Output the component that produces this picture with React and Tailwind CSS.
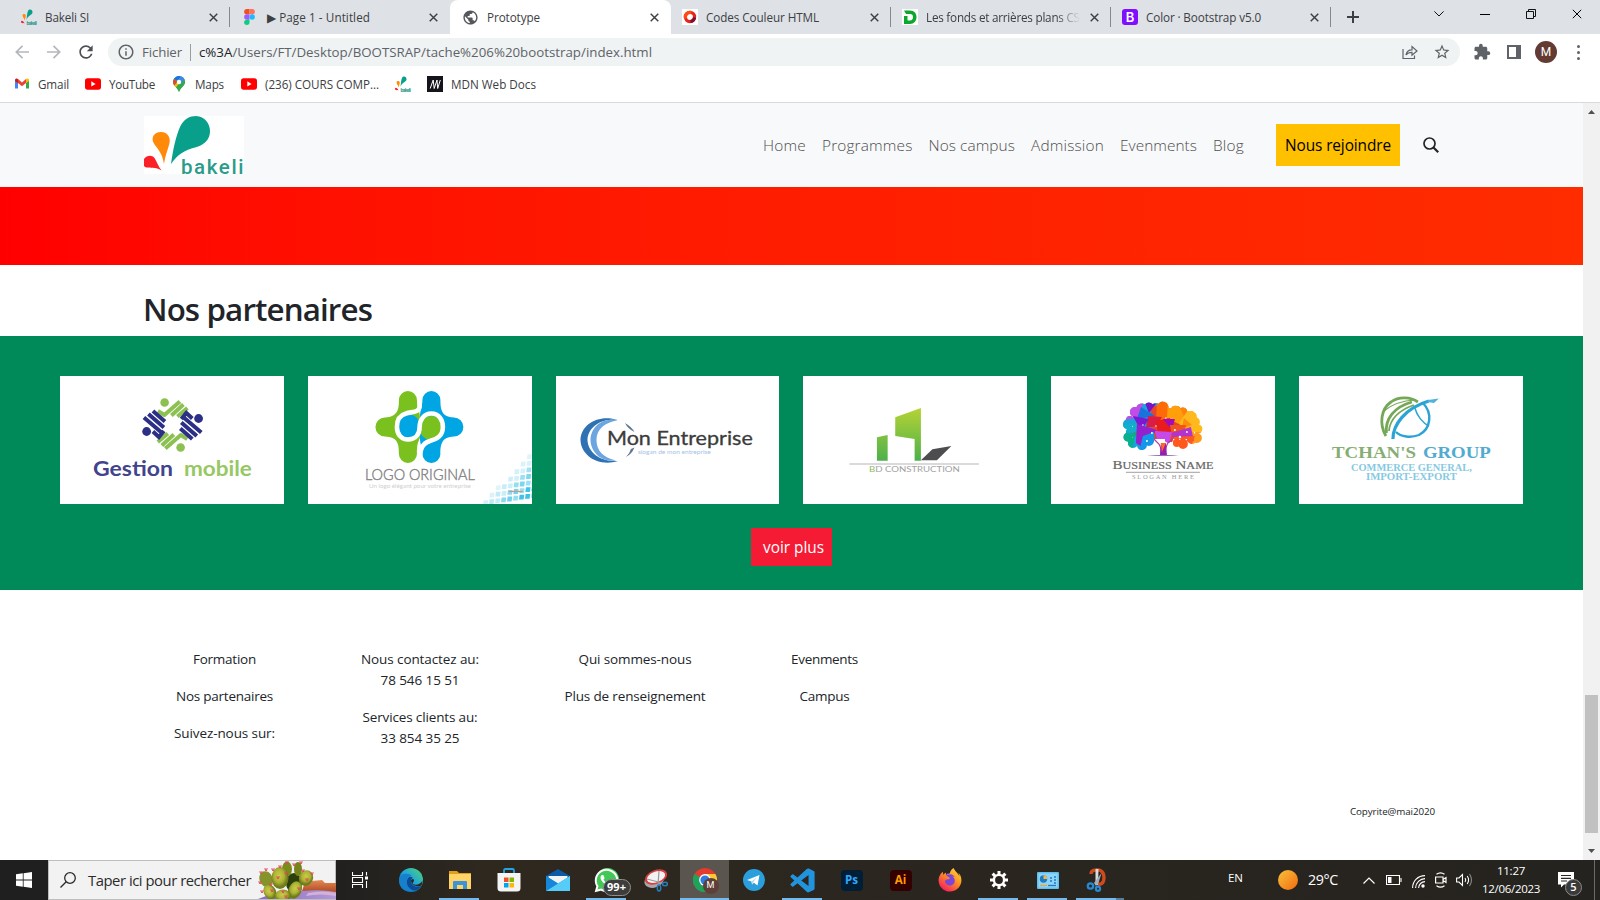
import { useLayoutEffect, useRef } from "react";
import { MdExtension, MdInfoOutline, MdPublic, MdRefresh, MdStarBorder } from "react-icons/md";
import { FaFirefoxBrowser, FaWhatsapp } from "react-icons/fa";
import { BiLogoVisualStudio } from "react-icons/bi";

/* One line of text whose tracking is adjusted so that it fills a given width. */
function Fit({ w, className = "", children }) {
  const ref = useRef(null);
  useLayoutEffect(() => {
    const el = ref.current;
    el.style.letterSpacing = "0px";
    const natural = el.getBoundingClientRect().width;
    el.style.letterSpacing = `${(w - natural) / el.textContent.length}px`;
  }, [w]);
  return (
    <span ref={ref} className={`inline-block shrink-0 whitespace-pre ${className}`}>
      {children}
    </span>
  );
}

function BakeliMark({ className }) {
  return (
    <svg viewBox="0 0 100 58" preserveAspectRatio="none" className={`overflow-visible ${className}`}>
      <rect width="100" height="58" fill="#fff" />
      <path d="M27 48C29 33 32 20 36 11C39.500 3 46 0 52 0C61 .5 66 8 66 15C66 24 60 29 51 31.500C41 34 34 38 27 48Z" fill="#08a08a" />
      <path d="M20 48C18.500 38 14 33 10.500 28.500C6 22 10 16 17 16C24 16 27 22 25.300 28C23 36 21.500 39 20 48Z" fill="#ff8a0a" />
      <path d="M17.500 54.500C13 51.500 8 52 4 51.500C2 51.500 1 51 0 50V43C3 39 8 39 10.500 42C13 46 14 50 17.500 54.500Z" fill="#fb2027" />
      <text x="37" y="57.800" fontFamily="Roboto" fontWeight="500" fontSize="20.500" fill="#2b9b8b" textLength="62.500">bakeli</text>
    </svg>
  );
}

function BakeliIcon() {
  return (
    <svg viewBox="0 0 16 16" className="size-4 shrink-0">
      <path d="M5.500 11C6 7 6 4 7 2C8 0 11 0 11.500 3C12 6 7 6 5.500 11Z" fill="#08a08a" />
      <path d="M3.800 11.500C3 9 1.300 8 1.600 6C2 4.500 4.500 4.500 4.800 6.500C4.800 8 4 9 3.800 11.500Z" fill="#ff8a0a" />
      <path d="M3.500 14.500C2 14 0 14.500 0 12.500C.5 11 2.500 12 3.500 14.500Z" fill="#fb2027" />
      <text x="5.500" y="15.600" fontFamily="Roboto" fontWeight="700" fontSize="5" fill="#2b9b8b" textLength="10.300">bakeli</text>
    </svg>
  );
}

function Cross({ className = "size-2 text-[#3c4043]", sw = 1.600 }) {
  return (
    <svg viewBox="0 0 10 10" className={`shrink-0 ${className}`}>
      <path d="M.8.8 9.200 9.200M9.200.8.8 9.200" stroke="currentColor" strokeWidth={sw} />
    </svg>
  );
}

function FigmaIcon() {
  return (
    <svg viewBox="0 0 12 18" className="mr-1 ml-[3px] h-4 w-[11px] shrink-0">
      <path d="M6 0H3a3 3 0 0 0 0 6h3Z" fill="#f24e1e" />
      <path d="M6 0h3a3 3 0 0 1 0 6H6Z" fill="#ff7262" />
      <path d="M6 6H3a3 3 0 0 0 0 6h3Z" fill="#a259ff" />
      <circle cx="9" cy="9" r="3" fill="#1abcfe" />
      <path d="M6 12H3a3 3 0 1 0 3 3Z" fill="#0acf83" />
    </svg>
  );
}

const tabIcons = {
  bakeli: <BakeliIcon />,
  figma: <FigmaIcon />,
  globe: <MdPublic className="size-[17px] shrink-0 text-[#54585c]" />,
  couleur: (
    <svg viewBox="0 0 16 16" className="size-4 shrink-0">
      <rect width="16" height="16" fill="#fff" />
      <circle cx="8" cy="8" r="4.600" fill="none" stroke="#e8231f" strokeWidth="3.200" />
      <path d="M3.600 9.500A4.600 4.600 0 0 1 9.500 3.600" fill="none" stroke="#ff4a12" strokeWidth="3.200" />
      <path d="M12.500 8.600A4.600 4.600 0 0 1 8.600 12.500" fill="none" stroke="#7b1032" strokeWidth="3.200" />
    </svg>
  ),
  dev: (
    <svg viewBox="0 0 16 16" className="size-4 shrink-0">
      <rect width="16" height="16" fill="#fff" />
      <path d="M2 1.500H8C12.500 1.500 14.500 4.500 14.500 8C14.500 12 12 15 8 15H2V7H5.500V11.500H8C10 11.500 11 10 11 8.200C11 6.200 10 5 8 5H4Z" fill="#0ba82b" />
    </svg>
  ),
  bootstrap: (
    <span className="flex size-4 shrink-0 items-center justify-center rounded-[3px] bg-[#7f0fff] font-['Inter',sans-serif] text-[13px] leading-none font-semibold text-white">B</span>
  ),
};

function Tab({ icon, title, w, active, divider, clip }) {
  return (
    <div className={active ? "relative flex h-[34px] w-[221px] shrink-0 items-center rounded-t-lg bg-white pr-3 pl-3" : "relative flex h-[34px] w-[220px] shrink-0 items-center pr-3 pl-[11px]"}>
      {tabIcons[icon]}
      <div className={clip ? "mb-[3px] ml-2 w-[154px] overflow-hidden [mask-image:linear-gradient(to_right,black_130px,transparent_154px)]" : "mb-[3px] ml-2"}>
        <Fit w={w} className="text-[11.7px] leading-5 text-[#3c4043]">{title}</Fit>
      </div>
      <Cross className="ml-auto size-[9px] text-[#3c4043]" />
      {divider && <span className="absolute top-[7px] right-0 h-5 w-px bg-[#85888c]" />}
    </div>
  );
}

function TabStrip() {
  return (
    <div className="flex h-[34px] items-center bg-[#dee1e6] pl-[10px]">
      <Tab icon="bakeli" title="Bakeli SI" w={44} divider />
      <Tab icon="figma" title="▶ Page 1 - Untitled" w={103} />
      <Tab icon="globe" title="Prototype" w={53} active />
      <Tab icon="couleur" title="Codes Couleur HTML" w={113} divider />
      <Tab icon="dev" title="Les fonds et arrières plans CSS" w={160} clip divider />
      <Tab icon="bootstrap" title="Color · Bootstrap v5.0" w={115} divider />
      <svg viewBox="0 0 12 12" className="ml-4 size-3 text-[#3c4043]">
        <path d="M6 0V12M0 6H12" stroke="currentColor" strokeWidth="2" />
      </svg>
      <div className="mr-[18px] mb-1.5 ml-auto flex items-center gap-9 text-[#111]">
        <svg viewBox="0 0 10 6" className="h-1.5 w-2.5"><path d="M.4.4 5 5 9.600.4" fill="none" stroke="currentColor" strokeWidth="1" /></svg>
        <span className="h-px w-2.5 bg-black" />
        <svg viewBox="0 0 10 10" className="size-2.5"><path d="M.5 2.500H7.500V9.500H.5ZM2.500 2.500V.5H9.500V7.500H7.500" fill="none" stroke="currentColor" /></svg>
        <Cross className="size-2.5 text-black" sw={1} />
      </div>
    </div>
  );
}

function Toolbar() {
  return (
    <div className="flex h-9 items-center bg-white pl-[15px]">
      <svg viewBox="0 0 14 14" className="size-3.5 text-[#b4b7ba]"><path d="M7.500.8 1.300 7 7.500 13.200M1.300 7H14" fill="none" stroke="currentColor" strokeWidth="1.700" /></svg>
      <svg viewBox="0 0 14 14" className="ml-[18px] size-3.5 text-[#b4b7ba]"><path d="M6.500.8 12.700 7 6.500 13.200M12.700 7H0" fill="none" stroke="currentColor" strokeWidth="1.700" /></svg>
      <MdRefresh className="ml-[15px] size-5 text-[#4c5054]" />
      <div className="ml-3 flex h-7 w-[1352px] items-center rounded-full bg-[#eff3f4] pl-[9px]">
        <MdInfoOutline className="size-[18px] text-[#5f6368]" />
        <Fit w={40} className="ml-[7px] text-[13.3px] leading-5 text-[#5f6368]">Fichier</Fit>
        <span className="mx-[8px] h-[17px] w-px bg-[#9a9da1]" />
        <Fit w={453} className="text-[13.3px] leading-5 text-[#5f6368]">
          <span className="text-[#202124]">c%3A</span>/Users/FT/Desktop/BOOTSRAP/tache%206%20bootstrap/index.html
        </Fit>
        <svg viewBox="0 0 16 16" className="mr-[15px] ml-auto size-4 text-[#5f6368]">
          <path d="M1 5V14.500H12.500V11.500M4 11C4.500 7.500 7 5.800 10 5.800V2.500L15 7L10 11.300V8.300C7.500 8.300 5.500 9 4 11Z" fill="none" stroke="currentColor" strokeWidth="1.200" />
        </svg>
        <MdStarBorder className="mr-[9px] size-[18px] text-[#5f6368]" />
      </div>
      <MdExtension className="ml-[13px] size-[18px] text-[#5f6368]" />
      <span className="ml-4 h-3.5 w-3.5 border-2 border-r-[5px] border-[#5f6368]" />
      <span className="ml-[14px] flex size-[22px] items-center justify-center rounded-full bg-[#643b33] font-['Roboto',sans-serif] text-[12px] text-white">M</span>
      <span className="ml-5 flex flex-col gap-[3px]">
        <i className="size-[3px] rounded-full bg-[#5f6368]" />
        <i className="size-[3px] rounded-full bg-[#5f6368]" />
        <i className="size-[3px] rounded-full bg-[#5f6368]" />
      </span>
    </div>
  );
}

function YouTubeIcon() {
  return (
    <svg viewBox="0 0 16 12" className="h-3 w-4">
      <rect width="16" height="11.500" y=".2" rx="2.600" fill="#f00" />
      <path d="M6.300 3.300 10.600 5.900 6.300 8.500Z" fill="#fff" />
    </svg>
  );
}

function Bookmarks() {
  return (
    <div className="flex h-8 items-center bg-white pb-[5px] pl-[15px] text-[11.7px] leading-5 text-[#3c4043]">
      <svg viewBox="0 0 14 11" className="h-[11px] w-3.5">
        <path d="M0 1.500V10.500H3V4Z" fill="#4285f4" />
        <path d="M14 1.500V10.500H11V4Z" fill="#34a853" />
        <path d="M3 1 7 4.500 11 1V5L7 8.300 3 5Z" fill="#ea4335" />
        <path d="M0 2C0 .3 2 0 3 1V5.200L0 2.900Z" fill="#c5221f" />
        <path d="M14 2C14 .3 12 0 11 1V5.200L14 2.900Z" fill="#fbbc04" />
      </svg>
      <Fit w={31} className="ml-[9px]">Gmail</Fit>
      <span className="ml-4"><YouTubeIcon /></span>
      <Fit w={46} className="ml-2">YouTube</Fit>
      <svg viewBox="0 0 12 16" className="ml-[18px] h-4 w-3">
        <path d="M6 0A6 6 0 0 1 12 6C12 10 7.500 11 6 16C4.500 11 0 10 0 6A6 6 0 0 1 6 0Z" fill="#34a853" />
        <path d="M.9 3A6 6 0 0 1 8 .4L4.500 4.500Z" fill="#1a73e8" />
        <path d="M.9 3 4.200 5.800 1.400 9.500C-.5 7 0 4.500.9 3Z" fill="#ea4335" />
        <path d="M1.400 9.500 7.800 2 10 10C6 12 4 13 1.400 9.500Z" fill="#fbbc04" />
        <path d="M8 .4C12 1.500 13 6 11 9C9 11.500 7 12.500 6 16C5 13 3.500 12 3 11.200L9 4Z" fill="#34a853" />
        <path d="M8 .4C9.500.8 10.800 2 11.400 3.300L7.600 7.800 4.500 4.500Z" fill="#4285f4" />
        <circle cx="6" cy="6" r="2.200" fill="#fff" />
      </svg>
      <Fit w={29} className="ml-[10px]">Maps</Fit>
      <span className="ml-[17px]"><YouTubeIcon /></span>
      <Fit w={114} className="ml-2">(236) COURS COMP...</Fit>
      <span className="ml-4"><BakeliIcon /></span>
      <svg viewBox="0 0 16 16" className="ml-4 size-4">
        <rect width="16" height="16" fill="#15141a" />
        <path d="M3.200 12.500 6.200 4 7.200 12.500 10 4 10.700 12.500 13.300 4" fill="none" stroke="#fff" strokeWidth="1" />
      </svg>
      <Fit w={85} className="ml-2">MDN Web Docs</Fit>
    </div>
  );
}

function Navbar() {
  const links = [["Home", 43], ["Programmes", 90.5], ["Nos campus", 86.5], ["Admission", 73], ["Evenments", 77], ["Blog", 31]];
  return (
    <nav className="flex h-[84px] items-center bg-[#f8f9fb] pl-36">
      <BakeliMark className="h-[58px] w-[100px]" />
      <div className="mt-0.5 ml-[519px] flex gap-4">
        {links.map(([t, w]) => <Fit key={t} w={w} className="text-[15.4px] leading-6 font-light text-[#4e4e4e]">{t}</Fit>)}
      </div>
      <button className="ml-8 flex h-[42px] w-[124px] items-center justify-center bg-[#ffc000] pt-0.5">
        <Fit w={106} className="text-[15.4px] leading-6 text-black">Nous rejoindre</Fit>
      </button>
      <svg viewBox="0 0 16 16" className="ml-[23px] size-4 text-[#212529]">
        <circle cx="6.500" cy="6.500" r="5.500" fill="none" stroke="currentColor" strokeWidth="1.700" />
        <path d="M10.500 10.500 15.200 15.200" stroke="currentColor" strokeWidth="2.200" />
      </svg>
    </nav>
  );
}

function GestionMobile() {
  const green = (
    <>
      <circle cx="104.700" cy="26.500" r="4.300" />
      <path d="M98 35 104.500 39 120 25.500M111.500 39.500 123.500 28.500M117.500 40.500 127.500 32" fill="none" stroke="#8cc152" strokeWidth="4" strokeLinejoin="round" />
    </>
  );
  const navy = (
    <>
      <circle cx="86.700" cy="55.500" r="4.400" />
      <path d="M84 41.500 101 56M88.500 38 104 51.500M93 35 105 45.500M93 55.500 99 61 104 55" fill="none" stroke="#2b2f86" strokeWidth="4" />
    </>
  );
  return (
    <>
      <g fill="#8cc152">{green}<g transform="rotate(180 112.700 49)">{green}</g></g>
      <g fill="#2b2f86">{navy}<g transform="rotate(180 112.700 49)">{navy}</g></g>
      <g fontFamily="Lato" fontWeight="700" fontSize="20.500">
        <text x="33" y="100.500" fill="#41448c" textLength="80" lengthAdjust="spacingAndGlyphs">Gestion</text>
        <text x="124" y="100.500" fill="#97c864" textLength="68" lengthAdjust="spacingAndGlyphs">mobile</text>
      </g>
    </>
  );
}

function LogoOriginal() {
  const cells = [];
  for (let r = 0; r < 8; r++) {
    for (let c = 0; c < 9; c++) {
      const x = 178 + c * 6 - r * 0.3;
      const y = 78 + r * 6.600 - c * 0.9;
      const k = (c + r * 1.25 - 8) / 8;
      if (k > 0 && y > 66) cells.push(<rect key={`${r}-${c}`} x={x} y={y} width="4.600" height="4.800" transform={`skewX(-8) translate(${y * 0.14} 0)`} fill={(c + r) % 3 ? "#35bfe6" : "#7fd8ef"} opacity={Math.min(0.95, k + 0.12)} />);
    }
  }
  return (
    <>
      <path d="M91 24A9 9 0 0 1 109 24C109 30 112 34 112 42V62C109 68 109 72 109 78A9 9 0 0 1 91 78C91 68 90 61 77 60.500A9.500 9.500 0 0 1 77 41.500C90 41 91 33 91 24Z" fill="#7ac01f" />
      <path d="M114.500 24A9 9 0 0 1 132.500 24C132.500 34 134 41 146 41.500A9.500 9.500 0 0 1 146 60.500C134 61 132.500 68 132.500 78A9 9 0 0 1 114.500 78C114.500 72 112 68 112 62V42C112 34 114.500 30 114.500 24Z" fill="#00a5e3" />
      <circle cx="100" cy="50" r="12" fill="#00a5e3" />
      <circle cx="123.500" cy="52" r="12" fill="#7ac01f" />
      <path d="M111.700 14V30C111.700 37 104 35.500 98 37.500C89 40 89 48 89 51C89 59 94 63.500 100 63.500C108 63.500 111.700 58 111.700 51C111.700 44 116 37.500 123.500 37.500C131 37.500 135 44 135 51C135 60 129 63 122 65C114 67.500 111.700 73 111.700 88" fill="none" stroke="#fff" strokeWidth="4.600" />
      <text x="57" y="104" fontFamily="Lato" fontWeight="300" fontSize="16" fill="#777" stroke="#888" strokeWidth=".4" textLength="110" lengthAdjust="spacingAndGlyphs">LOGO ORIGINAL</text>
      <text x="61" y="112.500" fontFamily="Lato" fontSize="6.500" fill="#cfcfcf" textLength="102" lengthAdjust="spacingAndGlyphs">Un logo élégant pour votre entreprise</text>
      {cells}
      <path d="M201 115.500H215" stroke="#c98" strokeWidth="1.200" />
    </>
  );
}

function MonEntreprise() {
  return (
    <>
      <path d="M62 44C43 38 25 48 24.500 64C25 80 43 91 62 85C45 86 32 77 31.500 64C32 51 45 42 62 44Z" fill="#2f72b4" />
      <path d="M62 44.500C46 41 35 51 34.500 64C35 77 46 86.500 60 84.500C48 82 40.500 75 40.500 64C40.500 53 49 46 62 44.500Z" fill="#6da5e0" />
      <path d="M69 47Q76 51 78.500 56Q72 53 69 47ZM78.500 71.500Q76 78 70 81Q74 77 75 73Z" fill="#5e7894" />
      <text x="51" y="69" fontFamily="Lato" fontWeight="400" fontSize="18.500" fill="#3c3c3c" stroke="#3c3c3c" strokeWidth=".3" textLength="146" lengthAdjust="spacingAndGlyphs">Mon Entreprise</text>
      <text x="82" y="78" fontFamily="Lato" fontSize="6" fill="#a3c3e4" textLength="73" lengthAdjust="spacingAndGlyphs">slogan de mon entreprise</text>
    </>
  );
}

function BdConstruction() {
  return (
    <>
      <defs>
        <linearGradient id="bd" x1="0" y1="32" x2="0" y2="85" gradientUnits="userSpaceOnUse">
          <stop stopColor="#b5d334" /><stop offset="1" stopColor="#4cb04c" />
        </linearGradient>
      </defs>
      <path d="M74 61.300 84.700 59V84.700H74ZM92.300 41.300 118 32V84.700H111.700V63L92.300 60Z" fill="url(#bd)" />
      <path d="M118 84.300 129.500 73.300 148.500 70 134 84.300Z" fill="#4d4d50" />
      <path d="M46.500 88H176" stroke="#b5b5b5" strokeWidth="1" />
      <text x="66" y="96.500" fontFamily="Lato" fontSize="8.300" fill="#a2a2a2" textLength="91" lengthAdjust="spacingAndGlyphs"><tspan fill="#8bbb6a">B</tspan>D CONSTRUCTION</text>
    </>
  );
}

function BusinessName() {
  return (
    <>
      <defs>
        <clipPath id="tree">
          <circle cx="84" cy="36" r="5" /><circle cx="91" cy="33.500" r="6" /><circle cx="98" cy="31.500" r="5" /><circle cx="105" cy="32" r="5" /><circle cx="112" cy="31" r="5.500" />
          <circle cx="118" cy="36" r="4" /><circle cx="125" cy="35" r="5.500" /><circle cx="132" cy="36" r="4.500" /><circle cx="140" cy="41" r="6" /><circle cx="144" cy="46" r="5" /><circle cx="147" cy="53" r="4.500" />
          <circle cx="146" cy="62" r="5" /><circle cx="141" cy="63" r="5" /><circle cx="132" cy="68" r="5" /><circle cx="126" cy="67" r="4" /><circle cx="77" cy="48" r="5" /><circle cx="79" cy="44" r="4" /><circle cx="77" cy="61" r="4.500" />
          <circle cx="82" cy="67" r="5" /><circle cx="80" cy="56" r="5" /><circle cx="91" cy="69" r="5" /><circle cx="98" cy="65" r="5" /><circle cx="118" cy="63" r="4" /><rect x="82" y="35" width="61" height="28" /><rect x="84" y="60" width="16" height="9" />
        </clipPath>
      </defs>
      <g clipPath="url(#tree)">
        <path d="M70 20H112L112 50 90 75H70Z" fill="#15a5d8" />
        <path d="M100 30H136V66H100Z" fill="#e8442c" />
        <path d="M70 25H93L88 42 72 44Z" fill="#c44be8" />
        <path d="M93 24 105 28 98 37Z" fill="#7a10c8" />
        <path d="M90 31 104 40 86 43Z" fill="#1a72dc" />
        <path d="M106 25H120L117 42 105 46Z" fill="#ff6a08" />
        <path d="M117 27 138 33 128 48 116 42Z" fill="#ffa00a" />
        <path d="M128 30 143 36 135 44Z" fill="#ff8210" />
        <path d="M138 33 157 44 150 57 134 58 128 47Z" fill="#ffb91c" />
        <path d="M133 42 141 49 131 53Z" fill="#ff8b0c" />
        <path d="M135 56H156V69H140Z" fill="#ff9a1c" />
        <path d="M97 40 111 41 106 50 95 52Z" fill="#dc1c44" />
        <path d="M105 45 119 42 122 56 107 57Z" fill="#e81c1c" />
        <path d="M112 43 124 43 121 54Z" fill="#a20cb8" />
        <path d="M119 49 135 49 133 60 121 60Z" fill="#f0561c" />
        <path d="M120 57 140 51 143 65 125 66Z" fill="#b433cf" />
        <path d="M123 61 144 60 138 76 118 72Z" fill="#ff5a1c" />
        <path d="M70 49 88 47 84 56 70 57Z" fill="#12aeca" />
        <path d="M82 40 98 43 90 55Z" fill="#7d18d2" />
        <path d="M69 56 84 58 81 76 69 72Z" fill="#08b18c" />
        <path d="M81 57 97 53 91 66Z" fill="#21a37c" />
        <path d="M86 48 106 54 92 72 85 67Z" fill="#9420d0" />
        <path d="M92 60 103 56 105 70 88 76Z" fill="#1497e8" />
        <path d="M104 55 121 56 118 69 107 66Z" fill="#c64aea" />
      </g>
      <g fill="#fff">
        <circle cx="92" cy="49" r=".8" /><circle cx="115" cy="42" r=".8" /><circle cx="124" cy="54" r="1" /><circle cx="101" cy="57" r="1" />
        <circle cx="96" cy="65" r="1" /><circle cx="129" cy="61" r="1.200" /><circle cx="105" cy="50" r=".8" /><circle cx="136" cy="56" r=".9" />
      </g>
      <path d="M110 79Q111 73 108 68L103 63M115 79Q113.500 73 117 67L122 63" fill="none" stroke="#b03aa8" strokeWidth="1.200" />
      <path d="M109 79.500 110 67 115 67 116 79.500Z" fill="#9b1cb0" />
      <path d="M110 67 115 67 111 76Z" fill="#ff6a1c" />
      <path d="M96 80Q106 78.500 112 79Q120 78.500 128 80Z" fill="#8a72b4" />
      <text x="61.500" y="93" fontFamily="Liberation Serif" fontSize="13" fill="#666" stroke="#666" strokeWidth=".2" textLength="101" lengthAdjust="spacingAndGlyphs">B<tspan fontSize="10.500">USINESS</tspan> N<tspan fontSize="10.500">AME</tspan></text>
      <path d="M75 96.300H149" stroke="#888" strokeWidth=".8" />
      <text x="81" y="102.800" fontFamily="Liberation Serif" fontSize="6.500" fill="#999" textLength="62">SLOGAN HERE</text>
    </>
  );
}

function TchansGroup() {
  return (
    <>
      <g fill="none" stroke="#74a857">
        <path d="M87 60C80 48 82 33 92 26C100 20 112 21 119 26" strokeWidth="2.800" />
        <path d="M87.500 57C86 43 95 31 113 26" strokeWidth="2.800" />
        <path d="M90 55C91 44 98 35 115 29" strokeWidth="1.700" />
        <path d="M85 35Q97 25 116 24" strokeWidth="1.200" />
      </g>
      <g fill="none" stroke="#2ba4d4">
        <path d="M94 63C94 49 106 32 130 25" strokeWidth="3.200" />
        <path d="M124 27C134 37 132 53 120 59C112 62 102 61 97 56" strokeWidth="2.400" />
        <path d="M116 32C118 40 124 47 130 50" strokeWidth="1.500" />
      </g>
      <path d="M129 24 140 22.500 135 27 129 26Z" fill="#4fb3d9" />
      <g fontFamily="Liberation Serif" fontWeight="700">
        <text x="33" y="82" fontSize="17.500" fill="#86ae74" textLength="84" lengthAdjust="spacingAndGlyphs">TCHAN'S</text>
        <text x="124" y="82" fontSize="17.500" fill="#4fabd0" textLength="68" lengthAdjust="spacingAndGlyphs">GROUP</text>
        <text x="52" y="95" fontSize="9.300" fill="#86c9e3" textLength="121" lengthAdjust="spacingAndGlyphs">COMMERCE GENERAL,</text>
        <text x="67" y="104.500" fontSize="9.300" fill="#86c9e3" textLength="91" lengthAdjust="spacingAndGlyphs">IMPORT-EXPORT</text>
      </g>
    </>
  );
}

function Partners() {
  const logos = [GestionMobile, LogoOriginal, MonEntreprise, BdConstruction, BusinessName, TchansGroup];
  return (
    <section className="flex h-[254px] flex-col items-center bg-[#008a5a] pt-10">
      <div className="grid w-full grid-cols-6 gap-6 px-[60px]">
        {logos.map((Logo, i) => (
          <div key={i} className="h-32 overflow-hidden bg-white">
            <svg viewBox="0 0 224 128" preserveAspectRatio="none" className="h-full w-full"><Logo /></svg>
          </div>
        ))}
      </div>
      <button className="mt-6 flex h-[38px] w-[81px] items-center bg-[#f61b35] pt-0.5 pl-3">
        <Fit w={61} className="text-[15.4px] leading-6 text-white">voir plus</Fit>
      </button>
    </section>
  );
}

function Footer() {
  const cols = [
    ["w-[102px]", [[["Formation", 63]], [["Nos partenaires", 97]], [["Suivez-nous sur:", 101]]]],
    ["w-[118px]", [[["Nous contactez au:", 118], ["78 546 15 51", 79]], [["Services clients au:", 115], ["33 854 35 25", 79]]]],
    ["w-[141px]", [[["Qui sommes-nous", 113]], [["Plus de renseignement", 141]]]],
    ["w-[67px]", [[["Evenments", 67]], [["Campus", 50]]]],
  ];
  return (
    <footer className="flex grow flex-col bg-white pt-[59px]">
      <div className="flex h-[145px] gap-[85.5px] pl-[173.5px] text-[13.5px] leading-[21px] text-[#212529]">
        {cols.map(([width, paras], i) => (
          <div key={i} className={`${width} flex flex-col gap-4`}>
            {paras.map((lines, j) => (
              <div key={j} className="flex flex-col items-center">
                {lines.map(([t, w]) => <Fit key={t} w={w}>{t}</Fit>)}
              </div>
            ))}
          </div>
        ))}
      </div>
      <div className="mt-[10px] flex justify-end pr-[148px] text-[9.8px] leading-4 text-[#212529]">
        <Fit w={85}>Copyrite@mai2020</Fit>
      </div>
    </footer>
  );
}

function Scrollbar() {
  return (
    <div className="flex w-[17px] shrink-0 flex-col items-center bg-[#f1f1f1]">
      <svg viewBox="0 0 7 4" className="mt-[7px] h-1 w-[7px]"><path d="M0 4 3.500 0 7 4Z" fill="#505050" /></svg>
      <span className="mt-[581px] h-[138px] w-[13px] bg-[#c1c1c1]" />
      <svg viewBox="0 0 7 4" className="mt-4 h-1 w-[7px]"><path d="M0 0 3.500 4 7 0Z" fill="#505050" /></svg>
    </div>
  );
}

function Cactus() {
  const spines = [[3, 12], [2, 22], [8, 9], [15, 9], [22, 6], [20, 17], [28, 13], [29, 2], [13, 24], [36, 4], [43, 2], [45, 10], [54, 13], [49, 19], [4, 31], [14, 30], [25, 31], [28, 36], [41, 28]];
  return (
    <svg viewBox="0 0 78 38" className="h-[38px] w-[78px]">
      <defs>
        <linearGradient id="ground" x1="0" x2="1"><stop stopColor="#8a6ac0" /><stop offset="1" stopColor="#b39ad8" /></linearGradient>
        <linearGradient id="mesa" y1="0" y2="1" x1="0" x2="0"><stop stopColor="#e58a52" /><stop offset="1" stopColor="#a94522" /></linearGradient>
        <radialGradient id="pad" cx=".45" cy=".4"><stop stopColor="#cacd48" /><stop offset=".6" stopColor="#adb334" /><stop offset="1" stopColor="#6f7c1a" /></radialGradient>
      </defs>
      <path d="M44 30 46 24 52 23 54 20 64 19 67 22H78V32H44Z" fill="url(#mesa)" />
      <path d="M0 38Q20 30 45 30Q62 28 78 31V38Z" fill="url(#ground)" />
      <path d="M50 32Q64 29 78 32V35Q62 32 48 35Z" fill="#d3b2d8" />
      <ellipse cx="36" cy="22" rx="8" ry="10" fill="#2d3f0c" />
      <ellipse cx="29" cy="8" rx="5" ry="7.500" fill="#7c8b1c" />
      <ellipse cx="40" cy="8" rx="4" ry="7" fill="#76851a" />
      <ellipse cx="8" cy="18" rx="6.500" ry="8" transform="rotate(-20 8 18)" fill="#86922a" />
      <ellipse cx="12" cy="31" rx="6" ry="8" transform="rotate(-30 12 31)" fill="url(#pad)" />
      <ellipse cx="48" cy="17" rx="7" ry="8" transform="rotate(25 48 17)" fill="url(#pad)" />
      <ellipse cx="37" cy="29" rx="6.500" ry="9" transform="rotate(25 37 29)" fill="url(#pad)" />
      <ellipse cx="22" cy="17" rx="8.500" ry="11" fill="url(#pad)" />
      <ellipse cx="25" cy="35" rx="8" ry="6.500" fill="url(#pad)" />
      <g stroke="#e0485c" strokeWidth=".9">
        {spines.map(([x, y]) => <path key={`${x}-${y}`} d={`M${x - 1.5} ${y - 1.5}L${x} ${y + 1}L${x + 1.5} ${y - 1.5}M${x} ${y - 2}V${y + 1}`} fill="none" />)}
      </g>
    </svg>
  );
}

function Slot({ children, bar, active }) {
  return (
    <div className={active ? "relative flex h-10 w-[49px] shrink-0 items-center justify-center bg-[#5a554e]" : "relative flex h-10 w-[49px] shrink-0 items-center justify-center"}>
      {children}
      {bar && <span className={active ? "absolute bottom-0 left-0 h-0.5 w-full bg-[#76b9ed]" : "absolute bottom-0 left-1 h-0.5 w-10 bg-[#76b9ed]"} />}
    </div>
  );
}

function TaskIcons() {
  return (
    <div className="flex">
      <Slot>
        <svg viewBox="0 0 16 16" className="mr-0.5 size-4 text-white">
          <path d="M.5 0V3.500H10.500V0M.5 16V12.500H10.500V16M.5 5.500H10.500V10.500H.5Z" fill="none" stroke="currentColor" strokeWidth="1.100" />
          <path d="M14.500 0V3.500M14.500 9V16" stroke="currentColor" strokeWidth="1.100" /><rect x="13" y="4.500" width="3" height="3" fill="currentColor" />
        </svg>
      </Slot>
      <span className="w-px" />
      <Slot>
        <svg className="absolute size-0"><defs>
          <linearGradient id="edge" x1="0" y1="1" x2="1" y2="0"><stop offset=".1" stopColor="#0c59a4" /><stop offset=".5" stopColor="#1ea4df" /><stop offset="1" stopColor="#52d66c" /></linearGradient>
          <linearGradient id="fox" x1="1" y1="0" x2=".3" y2="1"><stop stopColor="#ffe04a" /><stop offset=".45" stopColor="#ff9a1e" /><stop offset="1" stopColor="#f5205c" /></linearGradient>
        </defs></svg>
        <svg viewBox="0 0 24 24" className="size-6">
          <circle cx="12" cy="12" r="12" fill="url(#edge)" />
          <path d="M0 12C1 5 9 4 13 8C8 7 6 13 9 18C12 22 18 22 22 18C17 26 0 26 0 12Z" fill="#1680cc" />
          <path d="M9 10C6 14 9 23 17 22.500C19 22 21 20 22.500 17.500C18 20 12 18 12 13C12 11 13 10 14 10C12 8 10 9 9 10Z" fill="#0d4a94" />
          <path d="M12 13C12 11 14.500 10 15 12C15 14 13 15 14 16C17 18 22 16 23.500 12.500C23 15 23 16.500 22.500 17.500C18 19 13 18 12 13Z" fill="#2a2620" />
        </svg>
      </Slot>
      <Slot bar>
        <svg viewBox="0 0 22 18" className="h-[18px] w-[22px]">
          <path d="M0 0H8L10 2H22V18H0Z" fill="#dea018" /><path d="M0 3H22V18H0Z" fill="#ffd365" />
          <path d="M4 18V11Q4 10 5 10H17Q18 10 18 11V18H14V14H8V18Z" fill="#3a94d8" />
        </svg>
      </Slot>
      <Slot>
        <svg viewBox="0 0 24 24" className="size-6">
          <path d="M7 6V2.500Q7 1 8.500 1H15.500Q17 1 17 2.500V6" fill="none" stroke="#22a4e8" strokeWidth="1.800" />
          <path d="M.5 5H23.500V20Q23.500 23.500 20 23.500H4Q.5 23.500 .5 20Z" fill="#f4f4f4" />
          <path d="M7 9.500H11.500V14H7Z" fill="#f25022" /><path d="M12.500 9.500H17V14H12.500Z" fill="#7fba00" /><path d="M7 15H11.500V19.500H7Z" fill="#00a4ef" /><path d="M12.500 15H17V19.500H12.500Z" fill="#ffb900" />
        </svg>
      </Slot>
      <Slot>
        <svg viewBox="0 0 24 22" className="h-[22px] w-6">
          <path d="M0 7 12 0 24 7V12H0Z" fill="#0c59a6" /><path d="M2.500 7H21.500V14L12 18 2.500 14Z" fill="#f2f2f2" />
          <path d="M0 7 12 14.500 24 7V22H0Z" fill="#2aa9ec" /><path d="M0 22 24 7V22Z" fill="#55cdf8" /><path d="M0 7 12 14.500 0 22Z" fill="#1686d8" />
        </svg>
      </Slot>
      <Slot bar>
        <span className="relative flex size-6 items-center justify-center">
          <svg viewBox="0 0 24 24" className="absolute size-6"><path d="M1 23 2.500 17A11.500 11.500 0 1 1 7 21.500Z" fill="#43c858" /></svg>
          <FaWhatsapp className="relative size-[27px] shrink-0 text-white" />
          <span className="absolute top-[11px] left-2 flex h-[17px] w-7 items-center justify-center rounded-full border border-[#8f8f8f] bg-[#3d3d3d] text-[11px] font-bold text-white">99+</span>
        </span>
      </Slot>
      <Slot>
        <svg viewBox="0 0 24 24" className="size-6">
          <ellipse cx="10" cy="12.500" rx="10" ry="7" transform="rotate(-20 10 12)" fill="#a8a8aa" />
          <ellipse cx="12" cy="9" rx="11.500" ry="7" transform="rotate(-20 12 9)" fill="#d84040" />
          <ellipse cx="12" cy="9" rx="9.500" ry="5.300" transform="rotate(-20 12 9)" fill="#f2f2f2" />
          <path d="M3 11 18 15M15 3 14 17" stroke="#9a9a9e" strokeWidth="1.200" />
          <ellipse cx="21" cy="16" rx="2.500" ry="1.700" fill="none" stroke="#287cba" strokeWidth="1.600" /><ellipse cx="15" cy="20" rx="1.700" ry="3" fill="none" stroke="#287cba" strokeWidth="1.600" />
        </svg>
      </Slot>
      <Slot bar active>
        <span className="relative size-6">
          <svg viewBox="0 0 24 24" className="size-6">
            <circle cx="12" cy="12" r="12" fill="#e33b2e" />
            <path d="M12 12V24A12 12 0 0 1 1.600 6Z" fill="#1fa25a" /><path d="M12 6H22.400A12 12 0 0 1 12 24L17 12Z" fill="#fcc934" />
            <path d="M1.600 6 7 15 12 17 17 15 12 24A12 12 0 0 1 1.600 6Z" fill="#1fa25a" />
            <circle cx="12" cy="12" r="5.900" fill="#fff" /><circle cx="12" cy="12" r="4.600" fill="#2e7be6" />
          </svg>
          <span className="absolute top-[10px] left-[10px] flex size-4 items-center justify-center rounded-full bg-[#5f4038] font-['Roboto',sans-serif] text-[9px] text-white">M</span>
        </span>
      </Slot>
      <Slot>
        <svg viewBox="0 0 22 22" className="size-[22px]">
          <circle cx="11" cy="11" r="11" fill="#2b9fdb" /><path d="M4 11 16.500 6 14.500 16.500 10.800 13.800 9 15.500 8.500 12.500Z" fill="#fff" /><path d="M8.500 12.500 14 8.200 10 13.500 9 15.500Z" fill="#b8d5e8" />
        </svg>
      </Slot>
      <Slot bar><BiLogoVisualStudio className="size-[29px] text-[#2294dd]" /></Slot>
      <Slot><span className="flex h-[21px] w-[22px] items-center justify-center rounded-[4px] bg-[#001e36] text-[11.5px] font-bold text-[#31a8ff]">Ps</span></Slot>
      <Slot><span className="flex h-[21px] w-[22px] items-center justify-center rounded-[4px] bg-[#330000] text-[11.5px] font-bold text-[#ff9a00]">Ai</span></Slot>
      <Slot>
        <span className="relative flex size-6 items-center justify-center">
          <span className="absolute size-3.5 rounded-full bg-[#7b45d8]" />
          <FaFirefoxBrowser className="relative size-6" fill="url(#fox)" />
        </span>
      </Slot>
      <Slot bar>
        <svg viewBox="0 0 18 18" className="size-[18px] text-white">
          <g stroke="currentColor" strokeWidth="3">
            <path d="M9 0V4M9 14V18M0 9H4M14 9H18M2.600 2.600 5.400 5.400M12.600 12.600 15.400 15.400M15.400 2.600 12.600 5.400M5.400 12.600 2.600 15.400" />
          </g>
          <circle cx="9" cy="9" r="5.100" fill="none" stroke="currentColor" strokeWidth="2.400" />
        </svg>
      </Slot>
      <Slot bar>
        <svg viewBox="0 0 22 17" className="h-[17px] w-[22px]">
          <rect width="22" height="17" rx="1" fill="#5cc0f0" /><rect x="1.500" y="1.500" width="19" height="14" fill="#8fd4f6" />
          <circle cx="6.500" cy="7" r="3.700" fill="#1d7cc4" /><path d="M6.500 7V3.300A3.700 3.700 0 0 1 10.200 7Z" fill="#f6b73a" />
          <path d="M13 9H15M17 5H19M17 8H19M17 11H19M13 6H15" stroke="#1d7cc4" strokeWidth="1.500" /><path d="M3 13.500H10" stroke="#f6a030" strokeWidth="1.300" /><path d="M11 13.500H19" stroke="#1d7cc4" strokeWidth="1.300" />
        </svg>
      </Slot>
      <Slot bar>
        <svg viewBox="0 0 22 24" className="h-6 w-[22px]">
          <path d="M10 2C17 1 19 7 17.500 13C16.500 16 14 16.500 12 16.500M10 2C6 2 5 4 5 6" fill="none" stroke="#d04a1e" strokeWidth="3.400" />
          <path d="M9.500 1H12.500L12 17H9.500Z" fill="#d7dce0" /><path d="M15.500 5 12.500 15 10 18 8 15Z" fill="#a4acb4" />
          <circle cx="4.500" cy="18" r="2.700" fill="none" stroke="#258ad4" strokeWidth="2.300" /><circle cx="12" cy="20.800" r="2.100" fill="none" stroke="#258ad4" strokeWidth="2.200" />
        </svg>
        <span className="absolute right-[-3px] bottom-0 h-0.5 w-2 bg-[#527fa2]" />
      </Slot>
    </div>
  );
}

function Tray() {
  return (
    <div className="ml-auto flex h-10 items-center text-white">
      <Fit w={15} className="mb-1 text-[11.5px] leading-4">EN</Fit>
      <span className="ml-[35px] size-5 rounded-full bg-linear-to-br from-[#f7c03a] to-[#ef6a0c]" />
      <Fit w={30} className="ml-[10px] text-[14.3px] leading-5">29°C</Fit>
      <svg viewBox="0 0 12 7" className="ml-[25px] h-[7px] w-3"><path d="M.5 6.500 6 1 11.500 6.500" fill="none" stroke="currentColor" strokeWidth="1.200" /></svg>
      <svg viewBox="0 0 16 10" className="ml-[11px] h-2.5 w-4"><path d="M.5.5H13.500V9.500H.5ZM15 3V7" fill="none" stroke="currentColor" strokeWidth="1.100" /><path d="M2 2H5.500V8H2Z" fill="currentColor" /></svg>
      <svg viewBox="0 0 13 13" className="mt-0.5 ml-[10px] size-[13px]"><path d="M.6 13C.6 6 6 .6 13 .6M3.600 13C3.600 8 8 3.600 13 3.600M6.600 13C6.600 9.500 9.500 6.600 13 6.600" fill="none" stroke="currentColor" strokeWidth="1.100" /><circle cx="11" cy="11" r="1.700" fill="currentColor" /></svg>
      <svg viewBox="0 0 12 16" className="ml-[10px] h-4 w-3"><path d="M1.500 2.200Q5.500-.6 9.500 2.200M1.500 13.800Q5.500 16.600 9.500 13.800M.6 5H8V11H.6ZM8 7.500 11 5.500V10.500L8 8.500" fill="none" stroke="currentColor" strokeWidth="1.200" /></svg>
      <svg viewBox="0 0 17 14" className="ml-[9px] h-3.5 w-[17px]"><path d="M.6 5H3L6.500 1.500V12.500L3 9H.6ZM9 5Q10.500 7 9 9M11.200 3Q14 7 11.200 11" fill="none" stroke="currentColor" strokeWidth="1.100" /><path d="M13.500 1Q17.500 7 13.500 13" fill="none" stroke="#888" strokeWidth="1.100" /></svg>
      <div className="mb-px ml-[9px] flex w-[58px] flex-col items-center text-[11.5px] leading-[18px]">
        <Fit w={28}>11:27</Fit>
        <Fit w={58}>12/06/2023</Fit>
      </div>
      <span className="relative ml-[18px] h-4 w-4">
        <svg viewBox="0 0 16 16" className="size-4"><path d="M0 0H16V12.500H6L3 15.500V12.500H0Z" fill="#fff" /><path d="M3 3.500H13M3 6.300H13M3 9H9" stroke="#2a2620" strokeWidth="1.200" /></svg>
        <span className="absolute top-[7px] left-[7px] flex size-[17px] items-center justify-center rounded-full border border-[#8c8c8c] bg-[#3a3a3a] text-[11px] font-semibold">5</span>
      </span>
      <span className="mr-[5px] ml-5 h-10 w-px bg-[#6e6b66]" />
    </div>
  );
}

function Taskbar() {
  return (
    <div className="flex h-10 shrink-0 items-center overflow-hidden bg-linear-to-r from-[#1f1f1f] from-20% via-[#2e281f] via-30% to-[#25231f]">
      <svg viewBox="0 0 16 16" className="ml-4 size-4"><path d="M0 2.300 6.800 1.300V7.600H0ZM7.600 1.200 16 0V7.600H7.600ZM0 8.400H6.800V14.700L0 13.700ZM7.600 8.400H16V16L7.600 14.800Z" fill="#fff" /></svg>
      <div className="ml-4 flex h-10 w-72 shrink-0 items-center border border-[#bdbdbd] bg-[#f2f2f2] pl-[11px] text-[#2b2b2b]">
        <svg viewBox="0 0 16 16" className="size-4 shrink-0"><circle cx="10" cy="6" r="5.300" fill="none" stroke="currentColor" strokeWidth="1.300" /><path d="M6.200 9.800.5 15.500" stroke="currentColor" strokeWidth="1.300" /></svg>
        <Fit w={163} className="ml-3 text-[14.8px] leading-5">Taper ici pour rechercher</Fit>
        <span className="-mr-px ml-auto"><Cactus /></span>
      </div>
      <TaskIcons />
      <Tray />
    </div>
  );
}

export default function App() {
  return (
    <div className="flex h-[900px] w-[1600px] flex-col overflow-hidden bg-white font-['Open_Sans','Noto_Sans',sans-serif]">
      <TabStrip />
      <Toolbar />
      <Bookmarks />
      <div className="h-px shrink-0 bg-[#d8dade]" />
      <div className="flex h-[757px] shrink-0">
        <main className="flex w-[1583px] flex-col">
          <Navbar />
          <div className="h-[78px] shrink-0 bg-linear-to-r from-[#ff0000] to-[#ff2c00]" />
          <div className="flex h-[71px] shrink-0 items-center pt-4 pl-[143px]">
            <Fit w={229} className="text-[31.3px] leading-10 font-semibold text-[#212529]">Nos partenaires</Fit>
          </div>
          <Partners />
          <Footer />
        </main>
        <Scrollbar />
      </div>
      <Taskbar />
    </div>
  );
}
